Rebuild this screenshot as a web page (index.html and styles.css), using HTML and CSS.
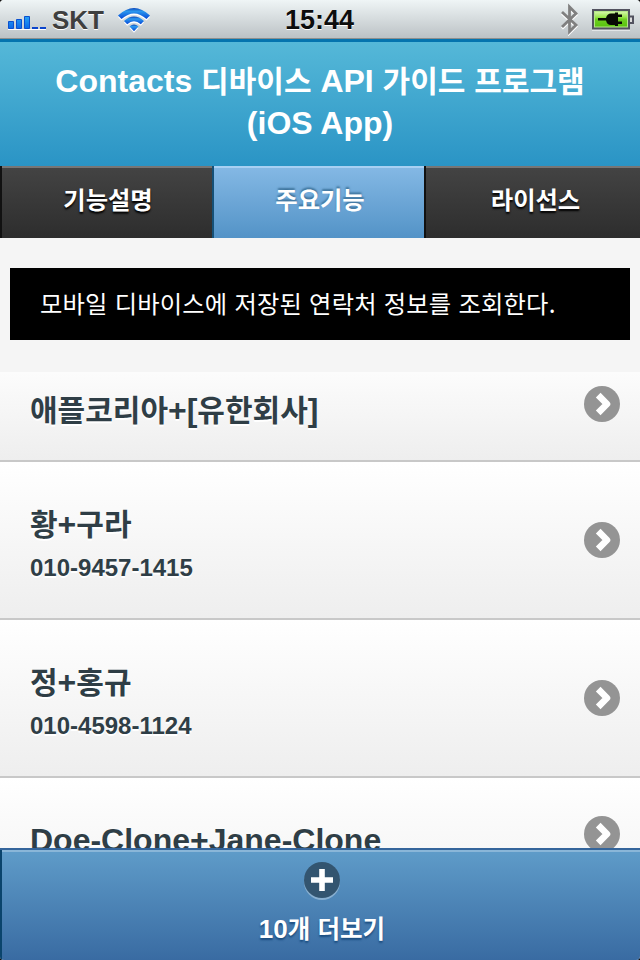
FILE: index.html
```html
<!DOCTYPE html>
<html lang="ko">
<head>
<meta charset="utf-8">
<title>Contacts 디바이스 API 가이드 프로그램</title>
<link rel="stylesheet" href="styles.css">
</head>
<body>
<div class="screen">
  <div class="status">
    <div class="status-left">
      <svg class="signal" width="40" height="16" viewBox="0 0 40 16">
        <defs><linearGradient id="b" x1="0" y1="0" x2="0" y2="1"><stop offset="0" stop-color="#29a3f5"/><stop offset="1" stop-color="#0a68e8"/></linearGradient></defs>
        <path d="M0 15.500h38" stroke="#fff" stroke-width="1"/>
        <g fill="url(#b)" stroke="#0b50cf"><path d="M.5 7.500h5v7h-5zM8.500 5.500h5v9h-5zM16.500 2.500h5v12h-5z"/></g>
        <path d="M24 14h6M32 14h6" stroke="#0b45cc" stroke-width="2"/>
      </svg>
      <span class="carrier">SKT</span>
      <svg class="wifi" width="34" height="26" viewBox="0 0 34 26">
        <defs><linearGradient id="w" x1="0" y1="0" x2="0" y2="1"><stop offset="0" stop-color="#0b46ba"/><stop offset=".3" stop-color="#2b98ee"/><stop offset="1" stop-color="#0748d6"/></linearGradient></defs>
        <g fill="#fff" transform="translate(0 1.500)"><path d="M1 8.500Q17-6.500 33 8.500L29.500 12Q17 .8 4.500 12Z"/><path d="M7 14Q17 5.200 27 14L23.800 17.200Q17 11.400 10.200 17.200Z"/><path d="M12.500 19.500Q17 15.700 21.500 19.500L17 24.200Z"/></g>
        <g fill="url(#w)"><path d="M1 8.500Q17-6.500 33 8.500L29.500 12Q17 .8 4.500 12Z"/><path d="M7 14Q17 5.200 27 14L23.800 17.200Q17 11.400 10.200 17.200Z"/><path d="M12.500 19.500Q17 15.700 21.500 19.500L17 24.200Z"/></g>
      </svg>
    </div>
    <div class="clock">15:44</div>
    <div class="status-right">
      <svg width="20" height="34" viewBox="0 0 20 34" fill="none" stroke-width="2.800">
        <path d="M2 10L16 23L9.500 29.500V5L16 11.500L2 25" stroke="#fff" transform="translate(0 1.500)"/>
        <path d="M2 10L16 23L9.500 29.500V5L16 11.500L2 25" stroke="#808080"/>
      </svg>
      <svg width="42" height="24" viewBox="0 0 42 24">
        <defs><linearGradient id="g" x1="0" y1="0" x2="0" y2="1"><stop offset="0" stop-color="#d2f5a4"/><stop offset=".35" stop-color="#9ae64e"/><stop offset=".5" stop-color="#6fcf21"/><stop offset="1" stop-color="#59c30f"/></linearGradient></defs>
        <path d="M0 21h38" stroke="#fff"/>
        <path d="M1 1h36v18.500h-36z" fill="#b5e58a" stroke="#52525f" stroke-width="2"/>
        <path d="M3 3h32v14.500H3z" fill="url(#g)"/>
        <path d="M38 7.500h3v6.500h-3" fill="#ddd" stroke="#52525f" stroke-width="2"/>
        <path d="M6 9h8q1-4.500 5-4.500h4v-1h3v2h4v2.500h-4v4.500h4v2.500h-4v2h-3v-1h-4q-4 0-5-4.500H6z" fill="#080b04"/>
      </svg>
    </div>
  </div>

  <header class="header">
    <h1>Contacts <span class="ko">디바이스</span> API <span class="ko">가이드</span> <span class="ko">프로그램</span><br>(iOS App)</h1>
  </header>

  <nav class="tabs">
    <a class="tab">기능설명</a>
    <a class="tab active">주요기능</a>
    <a class="tab">라이선스</a>
  </nav>

  <main class="content">
    <p class="notice">모바일 디바이스에 저장된 연락처 정보를 조회한다.</p>
    <ul class="list">
      <li class="row first">
        <div class="name"><span class="ko">애플코리아</span>+[<span class="ko">유한회사</span>]</div>
        <svg class="arrow" width="36" height="36" viewBox="0 0 36 36"><circle cx="18" cy="18" r="18" fill="#949494"/><path d="M14.200 9.200L23 18L14.200 26.800" fill="none" stroke="#fff" stroke-width="6.600" stroke-linejoin="round"/></svg>
      </li>
      <li class="row">
        <div class="entry"><div class="name"><span class="ko">황</span>+<span class="ko">구라</span></div><div class="phone">010-9457-1415</div></div>
        <svg class="arrow" width="36" height="36" viewBox="0 0 36 36"><circle cx="18" cy="18" r="18" fill="#949494"/><path d="M14.200 9.200L23 18L14.200 26.800" fill="none" stroke="#fff" stroke-width="6.600" stroke-linejoin="round"/></svg>
      </li>
      <li class="row">
        <div class="entry"><div class="name"><span class="ko">정</span>+<span class="ko">홍규</span></div><div class="phone">010-4598-1124</div></div>
        <svg class="arrow" width="36" height="36" viewBox="0 0 36 36"><circle cx="18" cy="18" r="18" fill="#949494"/><path d="M14.200 9.200L23 18L14.200 26.800" fill="none" stroke="#fff" stroke-width="6.600" stroke-linejoin="round"/></svg>
      </li>
      <li class="row last">
        <div class="entry"><div class="name">Doe-Clone+Jane-Clone</div></div>
        <svg class="arrow" width="36" height="36" viewBox="0 0 36 36"><circle cx="18" cy="18" r="18" fill="#949494"/><path d="M14.200 9.200L23 18L14.200 26.800" fill="none" stroke="#fff" stroke-width="6.600" stroke-linejoin="round"/></svg>
      </li>
    </ul>
  </main>

  <footer class="footer">
    <svg width="36" height="38" viewBox="0 0 36 38"><circle cx="18" cy="20" r="18" fill="#88afd0"/><circle cx="18" cy="18" r="18" fill="#335570"/><path d="M7 18h22M18 7v22" stroke="#fff" stroke-width="5.600"/></svg>
    <div class="more">10<span class="ko">개</span> <span class="ko">더보기</span></div>
  </footer>
</div>
</body>
</html>
```
FILE: styles.css
```css
* { box-sizing: border-box; }
body { margin: 0; background: #111; font-family: "Liberation Sans", "Noto Sans CJK KR", sans-serif; }
svg { display: block; flex: none; }

.screen { display: flex; flex-direction: column; width: 640px; height: 960px; overflow: hidden; border-radius: 4px; background: #f5f5f5; }

.status {
  display: grid; grid-template-columns: 1fr auto 1fr; flex: none; height: 39px;
  background: linear-gradient(#eff5f6, #bcc2c5);
  border-bottom: 1px solid #8c8f8e;
  font-weight: bold; text-shadow: 0 1px 0 #fff;
}
.status-left { display: flex; padding-left: 8px; }
.signal { margin-top: 14px; }
.carrier { margin-left: 4px; width: 52px; font-size: 26px; line-height: 40px; color: #3f3f3f; }
.wifi { margin: 7px 0 0 13px; }
.clock { padding-right: 1px; font-size: 27px; line-height: 40px; color: #0d0d0d; }
.status-right { display: flex; justify-content: flex-end; gap: 12px; padding: 2px 6px 0 0; }
.status-right svg:last-child { margin-top: 7px; }

.header {
  flex: none; height: 127px; padding-top: 18px;
  border-top: 3px solid #0574ae;
  background: linear-gradient(#55b8d8, #2a94c5);
  text-align: center; color: #fff;
}
h1 { margin: 0; font-size: 32px; line-height: 42px; }
.ko { font-family: "Noto Sans CJK KR", sans-serif; font-size: 30px; line-height: 0; }

.tabs { display: grid; grid-template-columns: 212px 212px 1fr; flex: none; height: 72px; }
.tab {
  border-left: 2px solid #111; padding-left: 2px;
  background: linear-gradient(#444, #2d2d2d); box-shadow: inset 0 2px 0 #767676;
  color: #fff; font-size: 24.300px; font-weight: bold; line-height: 69px; text-align: center;
  text-shadow: 0 2px 2px #000;
}
.tab.active {
  border-left-color: #155077;
  background: linear-gradient(#85b9e5, #5393c7); box-shadow: inset 0 2px 0 #a8d0f3;
  text-shadow: 0 -2px 2px #3d739b;
}
.tab:last-child { padding-left: 5px; }

.content { flex: 1; min-height: 0; overflow: hidden; padding-top: 30px; }
.notice {
  margin: 0 10px; height: 72px; padding-left: 30px; background: #000; color: #fff;
  font-family: "Noto Sans CJK KR", sans-serif; font-size: 24.300px; line-height: 70px; letter-spacing: .2px; white-space: nowrap;
}
.list { margin: 32px 0 0; padding: 0; list-style: none; }
.row {
  display: flex; align-items: center; justify-content: space-between; height: 158px;
  padding: 0 20px 0 30px; border-bottom: 2px solid #c8c8c8;
  background: linear-gradient(#fff, #eee); color: #2f3e46; text-shadow: 0 2px 0 #fff; font-weight: bold;
}
.first { height: 90px; align-items: flex-start; padding-top: 14px; background: linear-gradient(#fcfcfc, #eee); }
.first .name { margin-top: 3px; }
.entry { align-self: flex-start; padding-top: 41px; }
.name { font-size: 32px; line-height: 42px; }
.phone { padding-top: 2px; font-size: 24px; line-height: 42px; }
.last { align-items: flex-start; padding-top: 38px; }
.last .entry { padding-top: 3px; }

.footer {
  display: flex; flex-direction: column; align-items: center; flex: none; height: 112px; padding: 12px 0 0;
  border-top: 2px solid #34659b; box-shadow: inset 2px 0 0 #0a446c, inset 0 2px 0 #8ab6d8;
  background: linear-gradient(#5f9cc9, #396ba2);
  color: #fff; font-weight: bold;
}
.footer svg { margin-left: 4px; }
.more { margin: 10px 0 0 4px; font-size: 26px; line-height: 38px; text-shadow: 0 2px 2px #194b7e; }
.more .ko { font-size: 24.500px; }
```
